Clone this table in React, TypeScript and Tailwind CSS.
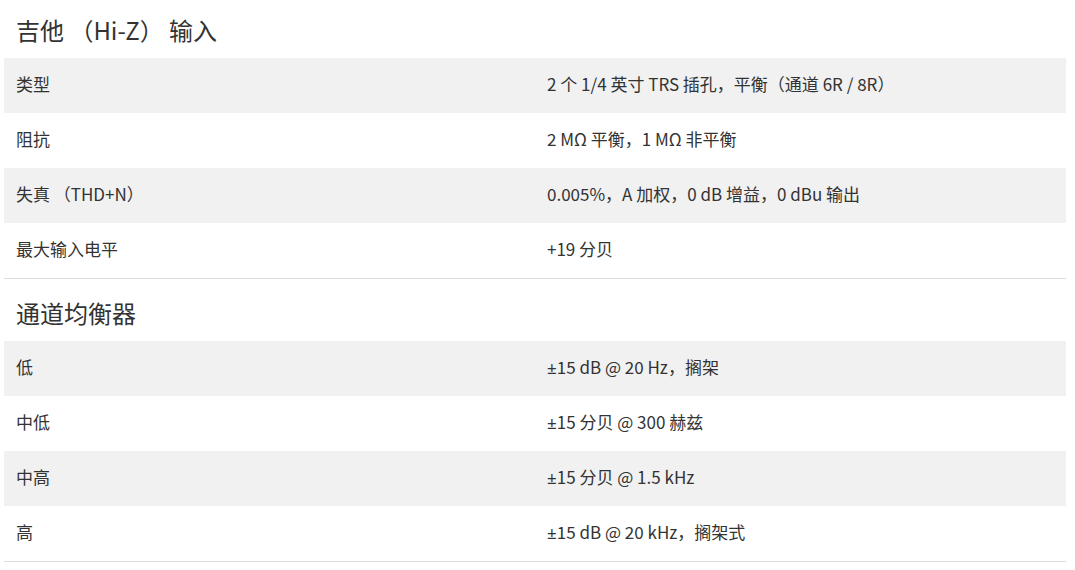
import React from "react";

type Row = { label: string; value: React.ReactNode };

// the ± sign is far too wide in the CJK face, so it gets a Latin one
const pm = <span style={{ fontFamily: '"Noto Sans", sans-serif' }}>±</span>;

const sections: { title: string; rows: Row[] }[] = [
  {
    title: "吉他 （Hi-Z） 输入",
    rows: [
      { label: "类型", value: "2 个 1/4 英寸 TRS 插孔，平衡（通道 6R / 8R）" },
      { label: "阻抗", value: "2 MΩ 平衡，1 MΩ 非平衡" },
      { label: "失真 （THD+N）", value: "0.005%，A 加权，0 dB 增益，0 dBu 输出" },
      { label: "最大输入电平", value: "+19 分贝" },
    ],
  },
  {
    title: "通道均衡器",
    rows: [
      { label: "低", value: <>{pm}15 dB @ 20 Hz，搁架</> },
      { label: "中低", value: <>{pm}15 分贝 @ 300 赫兹</> },
      { label: "中高", value: <>{pm}15 分贝 @ 1.5 kHz</> },
      { label: "高", value: <>{pm}15 dB @ 20 kHz，搁架式</> },
    ],
  },
];

export default function App() {
  return (
    <div
      className="w-[1075px] h-[570px] bg-white text-[#333] overflow-hidden"
      style={{ fontFamily: '"Noto Sans CJK SC", "Noto Sans", sans-serif' }}
    >
      <div className="ml-[4px] w-[1062px]">
        {sections.map((sec, si) => (
          <div key={sec.title} className="border-b border-[#dcdcdc]">
            <h2
              className={`px-3 text-[24px] leading-[30px] font-normal text-[#333] mb-[13px] ${
                si === 0 ? "pt-[15px]" : "pt-[19px]"
              }`}
            >
              {sec.title}
            </h2>
            {sec.rows.map((row, i) => (
              <div
                key={row.label}
                className={`grid grid-cols-2 h-[55px] items-center pb-[3px] text-[17px] ${
                  i % 2 === 0 ? "bg-[#f1f1f1]" : "bg-white"
                }`}
              >
                <div className="px-3">{row.label}</div>
                <div className="px-3">{row.value}</div>
              </div>
            ))}
          </div>
        ))}
      </div>
    </div>
  );
}
